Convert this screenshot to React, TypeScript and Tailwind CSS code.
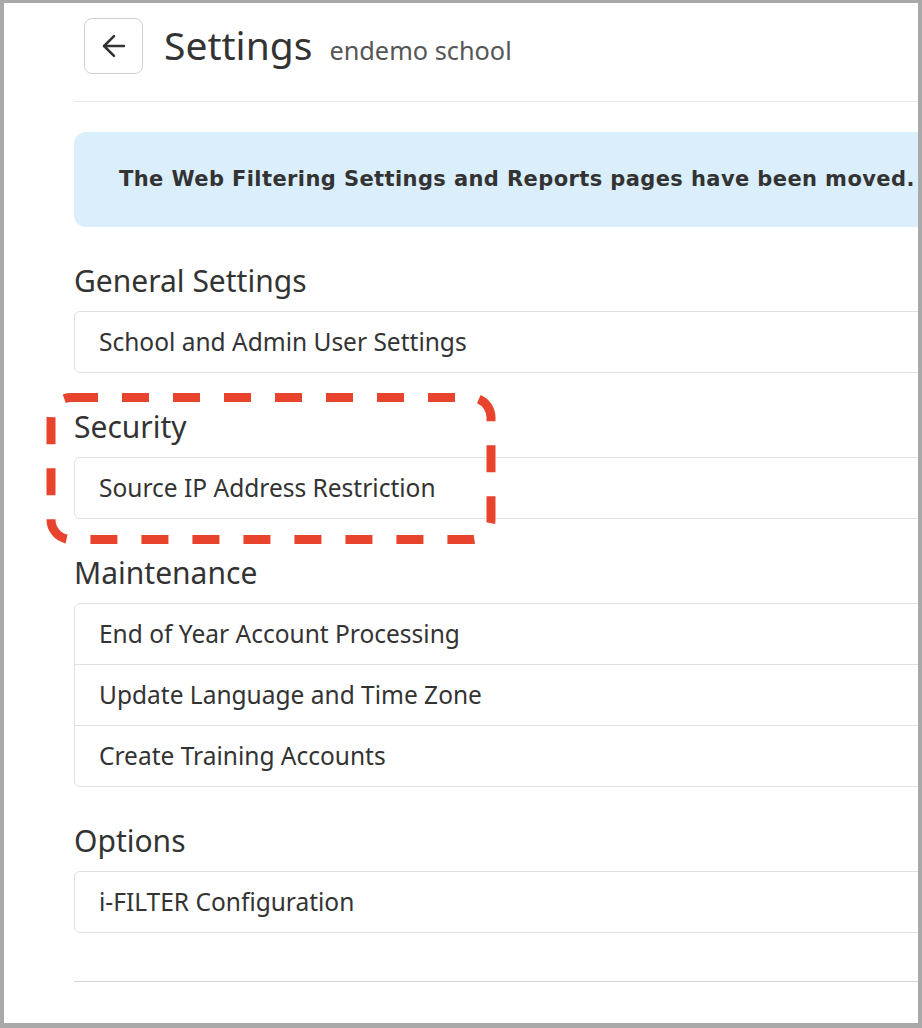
import { ArrowLeft } from "lucide-react";

const sections = [
  { title: "General Settings", items: ["School and Admin User Settings"] },
  { title: "Security", items: ["Source IP Address Restriction"] },
  {
    title: "Maintenance",
    items: [
      "End of Year Account Processing",
      "Update Language and Time Zone",
      "Create Training Accounts",
    ],
  },
  { title: "Options", items: ["i-FILTER Configuration"] },
];

const App = () => {
  return (
    <div className="relative w-[922px] h-[1028px] bg-white font-['Noto_Sans',sans-serif] text-[#333]">
      <div className="w-full h-full overflow-hidden border-[#a9a9a9] border-t-[3px] border-l-[4px] border-r-[4px] border-b-[5px]">
        <div className="w-[1200px] pl-[70px] pt-[15px]">
          {/* Header */}
          <div className="flex items-center pl-[10px]">
            <button className="w-[59px] h-[56px] flex items-center justify-center rounded-[8px] border border-[#cfcfcf] bg-white">
              <ArrowLeft size={34} strokeWidth={1.8} className="text-[#333]" />
            </button>
            <div className="ml-[21px] mt-[2px] flex items-baseline">
              <h1 className="text-[39px] leading-none">Settings</h1>
              <span className="ml-[17px] text-[25.3px] text-[#555]">endemo school</span>
            </div>
          </div>
          <div className="mt-[27px] border-t border-[#e6e6e6]" />

          {/* Notice */}
          <div className="mt-[30px] h-[95px] flex items-center pl-[45px] rounded-[12px] bg-[#daeefb]">
            <p className="font-['DejaVu_Sans',sans-serif] font-bold text-[21px] tracking-[0.4px] text-[#333] whitespace-nowrap">
              The Web Filtering Settings and Reports pages have been moved.
            </p>
          </div>

          {/* Sections */}
          <div className="mt-[37px] flex flex-col gap-[37px]">
            {sections.map((s) => (
              <section key={s.title}>
                <h2 className="text-[30px] leading-[34px] mb-[13px]">{s.title}</h2>
                <ul className="rounded-[6px] border border-[#dee2e6] divide-y divide-[#dee2e6]">
                  {s.items.map((item) => (
                    <li key={item} className="box-content h-[60px] flex items-center px-[24px] text-[24.5px]">
                      {item}
                    </li>
                  ))}
                </ul>
              </section>
            ))}
          </div>

          <div className="mt-[48px] border-t border-[#d4d4d4]" />
        </div>
      </div>

      {/* highlight box */}
      <svg className="absolute top-0 left-0 pointer-events-none" width="922" height="1028">
        <rect
          x="51"
          y="397.5"
          width="440"
          height="142"
          rx="20"
          fill="none"
          stroke="#e8432c"
          strokeWidth="9"
          strokeDasharray="27 24"
        />
      </svg>
    </div>
  );
};

export default App;
